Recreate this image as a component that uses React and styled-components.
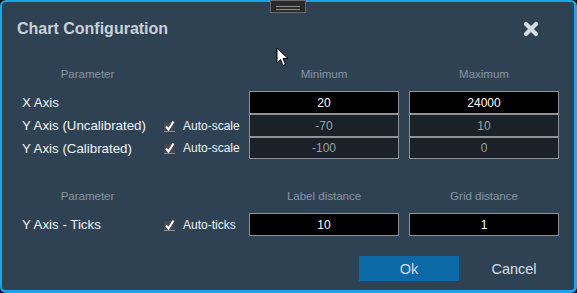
import React from "react";
import styled, { createGlobalStyle } from "styled-components";

const GlobalStyle = createGlobalStyle`
  html, body {
    margin: 0;
    padding: 0;
    background: #0e1216;
  }
  * {
    box-sizing: border-box;
  }
`;

const Dialog = styled.div`
  position: relative;
  display: flex;
  flex-direction: column;
  width: 577px;
  height: 293px;
  background-color: #2f4254;
  border-style: solid;
  border-color: #1aa6ea;
  border-width: 2px 3px 3px 2px;
  border-radius: 6px;
  font-family: "Liberation Sans", Arial, sans-serif;
`;

const Handle = styled.div`
  position: absolute;
  top: -2px;
  left: 268px;
  width: 36px;
  height: 13px;
  background-color: #2a2a2a;
  border: 1px solid #6b6b6b;
  display: flex;
  flex-direction: column;
  justify-content: center;
  align-items: center;
  gap: 2px;
  padding-top: 2px;
  span {
    display: block;
    width: 24px;
    height: 1px;
    background-color: #8d8d8d;
  }
`;

const TitleBar = styled.div`
  display: flex;
  align-items: center;
  justify-content: space-between;
  height: 24px;
  margin-top: 15px;
  padding: 0 35px 0 15px;
`;

const Title = styled.div`
  font-size: 16px;
  font-weight: 700;
  line-height: 24px;
  color: #c9d0d7;
`;

const CloseButton = styled.div`
  display: flex;
  width: 16px;
  height: 16px;
`;

const Section = styled.div`
  display: grid;
  grid-template-columns: 131px 76px 150px 150px;
  column-gap: 10px;
  padding-left: 20px;
  margin-top: ${props => props.top}px;
`;

const ColHeader = styled.div`
  font-size: 11.5px;
  line-height: 14px;
  height: 14px;
  color: #8995a2;
  text-align: center;
  white-space: nowrap;
  margin-bottom: 10px;
`;

const RowLabel = styled.div`
  display: flex;
  align-items: center;
  font-size: 13.3px;
  color: #f1f4f7;
  white-space: nowrap;
  height: ${props => props.h}px;
`;

const CheckCell = styled.label`
  display: flex;
  align-items: center;
  gap: 7px;
  font-size: 12px;
  color: #eef2f5;
  white-space: nowrap;
  height: ${props => props.h}px;
  svg {
    flex-shrink: 0;
  }
`;

const ValueInput = styled.input`
  width: 150px;
  height: ${props => props.h}px;
  margin: 0;
  padding: 0;
  border: 1px solid #8f9397;
  outline: none;
  background-color: ${props => (props.disabled ? "#1a2129" : "#000000")};
  color: ${props => (props.disabled ? "#9aa3ac" : "#ffffff")};
  font-family: "Liberation Sans", Arial, sans-serif;
  font-size: 12px;
  text-align: center;
  -webkit-text-fill-color: ${props => (props.disabled ? "#9aa3ac" : "#ffffff")};
  opacity: 1;
`;

const ButtonRow = styled.div`
  display: flex;
  justify-content: flex-end;
  gap: 10px;
  margin-top: 20px;
  padding-right: 15px;
`;

const Button = styled.div`
  display: flex;
  align-items: center;
  justify-content: center;
  width: ${props => (props.primary ? 100 : 90)}px;
  height: 25px;
  background-color: ${props => (props.primary ? "#0b69a6" : "transparent")};
  color: #d7dee5;
  font-size: 14.5px;
`;

const Cursor = styled.svg`
  position: absolute;
  left: 274px;
  top: 45px;
`;

const CloseIcon = () => (
  <svg width="16" height="16" viewBox="0 0 16 16">
    <path
      d="M3 3 L13 13 M13 3 L3 13"
      stroke="#d5dce2"
      strokeWidth="4.2"
      strokeLinecap="round"
    />
  </svg>
);

const CheckBox = () => (
  <svg width="13" height="14" viewBox="0 0 13 14">
    <rect x="1" y="3" width="11" height="10" fill="#45484d" />
    <rect x="1" y="12" width="11" height="1" fill="#8a8d91" />
    <path
      d="M3 7.5 L5.5 10.5 L10.5 2.5"
      stroke="#ffffff"
      strokeWidth="2"
      fill="none"
    />
  </svg>
);

const axisRows = [
  { label: "X Axis", check: null, min: "20", max: "24000", disabled: false, h: 23 },
  { label: "Y Axis (Uncalibrated)", check: "Auto-scale", min: "-70", max: "10", disabled: true, h: 23 },
  { label: "Y Axis (Calibrated)", check: "Auto-scale", min: "-100", max: "0", disabled: true, h: 22 },
];

export default function App() {
  return (
    <>
      <GlobalStyle />
      <Dialog>
        <Handle>
          <span />
          <span />
        </Handle>
        <TitleBar>
          <Title>Chart Configuration</Title>
          <CloseButton>
            <CloseIcon />
          </CloseButton>
        </TitleBar>

        <Section top={26}>
          <ColHeader>Parameter</ColHeader>
          <div />
          <ColHeader>Minimum</ColHeader>
          <ColHeader>Maximum</ColHeader>
          {axisRows.map(row => (
            <React.Fragment key={row.label}>
              <RowLabel h={row.h}>{row.label}</RowLabel>
              <CheckCell h={row.h}>
                {row.check && (
                  <>
                    <CheckBox />
                    {row.check}
                  </>
                )}
              </CheckCell>
              <ValueInput h={row.h} readOnly disabled={row.disabled} value={row.min} />
              <ValueInput h={row.h} readOnly disabled={row.disabled} value={row.max} />
            </React.Fragment>
          ))}
        </Section>

        <Section top={30}>
          <ColHeader>Parameter</ColHeader>
          <div />
          <ColHeader>Label distance</ColHeader>
          <ColHeader>Grid distance</ColHeader>
          <RowLabel h={23}>Y Axis - Ticks</RowLabel>
          <CheckCell h={23}>
            <CheckBox />
            Auto-ticks
          </CheckCell>
          <ValueInput h={23} readOnly value="10" />
          <ValueInput h={23} readOnly value="1" />
        </Section>

        <ButtonRow>
          <Button primary>Ok</Button>
          <Button>Cancel</Button>
        </ButtonRow>

        <Cursor width="14" height="20" viewBox="0 0 14 20">
          <path
            d="M1 1 L1 16 L4.5 12.5 L7 18.5 L9.5 17.5 L7 11.5 L12 11.5 Z"
            fill="#ffffff"
            stroke="#000000"
            strokeWidth="1"
            strokeLinejoin="miter"
          />
        </Cursor>
      </Dialog>
    </>
  );
}
